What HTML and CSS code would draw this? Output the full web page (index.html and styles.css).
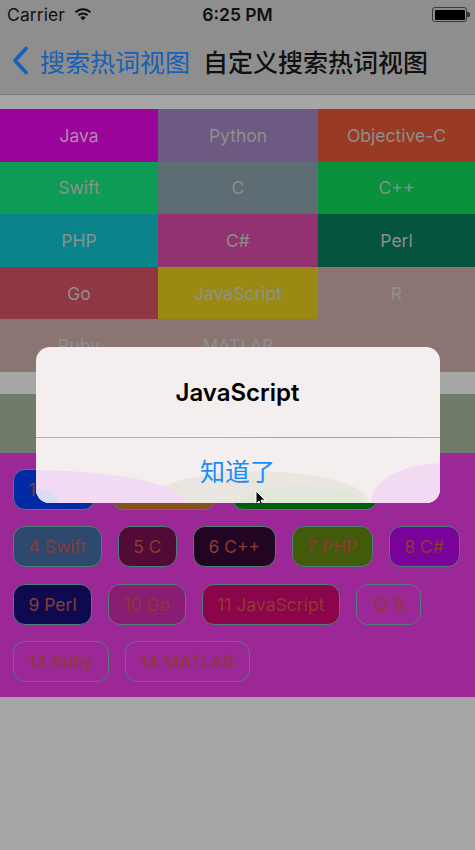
FILE: index.html
```html
<!DOCTYPE html>
<html lang="zh">
<head>
<meta charset="utf-8">
<title>自定义搜索热词视图</title>
<link rel="stylesheet" href="styles.css">
</head>
<body>
<div class="screen">
  <header class="top">
    <div class="statusbar">
      <div class="sb-left">
        <span class="carrier">Carrier</span>
        <svg class="wifi" width="18" height="13" viewBox="0 0 18 13">
          <path d="M9 12.5 L6.3 9.4 A4 4 0 0 1 11.7 9.4 Z" fill="#111"/>
          <path d="M4.4 7.3 A6.6 6.6 0 0 1 13.6 7.3" stroke="#111" stroke-width="2" fill="none"/>
          <path d="M1.6 4.3 A10.4 10.4 0 0 1 16.4 4.3" stroke="#111" stroke-width="2" fill="none"/>
        </svg>
      </div>
      <span class="time">6:25 PM</span>
      <div class="battery"><div class="battery-body"><div class="battery-fill"></div></div><div class="battery-nub"></div></div>
    </div>
    <div class="navbar">
      <a class="back">
        <svg class="chevron" width="18" height="29" viewBox="0 0 18 29"><path d="M15 2.5 L4 14.5 L15 26.5" stroke="#1660b8" stroke-width="3.6" fill="none" stroke-linecap="round" stroke-linejoin="round"/></svg>
        <span>搜索热词视图</span>
      </a>
      <span class="title">自定义搜索热词视图</span>
    </div>
  </header>

  <main class="content">
    <section class="hot-grid">
      <div class="cell c-java">Java</div>
      <div class="cell c-python">Python</div>
      <div class="cell c-objc">Objective-C</div>
      <div class="cell c-swift">Swift</div>
      <div class="cell c-c">C</div>
      <div class="cell c-cpp">C++</div>
      <div class="cell c-php">PHP</div>
      <div class="cell c-csharp">C#</div>
      <div class="cell c-perl">Perl</div>
      <div class="cell c-go">Go</div>
      <div class="cell c-js">JavaScript</div>
      <div class="cell">R</div>
      <div class="cell">Ruby</div>
      <div class="cell">MATLAB</div>
    </section>

    <div class="band"></div>

    <section class="tags">
      <span class="tag t1">1 Java</span>
      <span class="tag t2">2 Python</span>
      <span class="tag t3">3 Objective-C</span>
      <span class="tag t4">4 Swift</span>
      <span class="tag t5">5 C</span>
      <span class="tag t6">6 C++</span>
      <span class="tag t7">7 PHP</span>
      <span class="tag t8">8 C#</span>
      <span class="tag t9">9 Perl</span>
      <span class="tag t10">10 Go</span>
      <span class="tag t11">11 JavaScript</span>
      <span class="tag">12 R</span>
      <span class="tag">13 Ruby</span>
      <span class="tag">14 MATLAB</span>
    </section>
  </main>

  <div class="overlay">
    <div class="alert">
      <div class="alert-title">JavaScript</div>
      <div class="alert-sep"></div>
      <div class="alert-button">知道了</div>
      <svg class="cursor" width="12" height="18" viewBox="0 0 12 18"><path d="M1 1 L1 14 L4 11 L6.5 16.5 L8.5 15.5 L6 10.2 L10.2 10.2 Z" fill="#000" stroke="#fff" stroke-width="1"/></svg>
    </div>
  </div>
</div>
</body>
</html>
```

FILE: styles.css
```css
* { box-sizing: border-box; }
html, body { margin: 0; padding: 0; }
body {
  background: #a6a6a6;
  font-family: "Inter", "Noto Sans CJK SC", sans-serif;
  width: 475px;
  height: 850px;
  overflow: hidden;
}
.screen { position: relative; width: 475px; height: 850px; }

.top {
  background: #8e8e8e;
  border-bottom: 1px solid #7a7a7a;
  height: 95px;
  display: flex;
  flex-direction: column;
}
.statusbar {
  height: 29px;
  display: flex;
  align-items: center;
  justify-content: space-between;
  padding: 0 5px 0 7px;
  position: relative;
  font-size: 17.5px;
  color: #111;
}
.sb-left { display: flex; align-items: center; gap: 9px; }
.carrier { letter-spacing: 0.1px; }
.wifi { margin-top: -1px; }
.time {
  position: absolute;
  left: 0; right: 0;
  text-align: center;
  font-weight: 600;
  pointer-events: none;
}
.battery { display: flex; align-items: center; }
.battery-body {
  width: 35px; height: 15px;
  border: 1.5px solid #3a3a3a;
  border-radius: 3px;
  padding: 1.5px;
}
.battery-fill { width: 100%; height: 100%; background: #000; border-radius: 1px; }
.battery-nub { width: 3px; height: 5px; background: #333; border-radius: 0 1.5px 1.5px 0; }

.navbar {
  flex: 1;
  display: flex;
  align-items: center;
  padding: 0 0 2px 11px;
  font-size: 25px;
}
.back { display: flex; align-items: center; color: #1660b8; gap: 11px; }
.chevron { display: block; }
.title { color: #111; margin-left: 13px; font-weight: 500; }

.content { padding-top: 14px; }
.hot-grid {
  display: grid;
  grid-template-columns: 158px 160px 157px;
  grid-auto-rows: 52.6px;
  background: #8b7572;
}
.cell {
  display: flex;
  align-items: center;
  justify-content: center;
  color: #8f8f8f;
  font-size: 17.5px;
}
.c-java { background: #9c059c; color: #b387b3; }
.c-python { background: #6d5a82; }
.c-objc { background: #983b22; }
.c-swift { background: #0c9c55; }
.c-c { background: #5e6d74; }
.c-cpp { background: #09913b; }
.c-php { background: #0a848a; }
.c-csharp { background: #933270; }
.c-perl { background: #045440; }
.c-go { background: #8f3843; }
.c-js { background: #9a8a13; }

.band {
  margin-top: 22px;
  height: 59px;
  background: #6f7a6a;
}
.tags {
  background: #9c2796;
  display: flex;
  flex-wrap: wrap;
  gap: 16.5px 16px;
  padding: 16px 4px 15px 13px;
}
.tag {
  height: 41px;
  display: flex;
  align-items: center;
  padding: 0 14.5px;
  border: 1px solid #4f7d7a;
  border-radius: 12px;
  color: #8c3b35;
  font-size: 17.5px;
}
.t1 { background: #002aa6; }
.t2 { background: #8a4f1e; }
.t3 { background: #005e0a; }
.t4 { background: #2d4a6e; }
.t5 { background: #520a36; }
.t6 { background: #210522; }
.t7 { background: #425b0b; }
.t8 { background: #79039a; }
.t9 { background: #0f0a4f; }
.t10 { background: #891d72; }
.t11 { background: #8c0449; }

.overlay {
  position: absolute;
  inset: 0;
  display: flex;
  align-items: center;
  justify-content: center;
}
.alert {
  position: relative;
  width: 404px;
  margin-top: -1px;
  background: #f4eeee;
  border-radius: 14px;
  overflow: hidden;
  display: flex;
  flex-direction: column;
}
.alert-title {
  height: 90px;
  display: flex;
  align-items: center;
  justify-content: center;
  font-size: 24px;
  font-weight: 600;
  color: #000;
  padding-top: 2px;
}
.alert-sep {
  height: 1px;
  background: linear-gradient(to right, #a9a6e6, #c79ad6 30%, #d68fc0 55%, #a3a3a3 75%, #d793c6);
}
.alert-button {
  height: 65px;
  display: flex;
  align-items: center;
  justify-content: center;
  font-size: 25px;
  color: #1a8cff;
  padding-bottom: 1px;
  background:
    radial-gradient(22px 14px at 0 100%, #d9dcf5 98%, transparent 100%),
    radial-gradient(150px 33px at 0 100%, #f2dbf2 98%, transparent 100%),
    radial-gradient(62px 17px at 265px 100%, #dfe7d8 98%, transparent 100%),
    radial-gradient(112px 32px at 222px 100%, #e8e6df 98%, transparent 100%),
    radial-gradient(70px 40px at 404px 100%, #f2dbf2 98%, transparent 100%),
    #f4eeee;
}
.cursor {
  position: absolute;
  left: 219px;
  top: 143px;
}
```
